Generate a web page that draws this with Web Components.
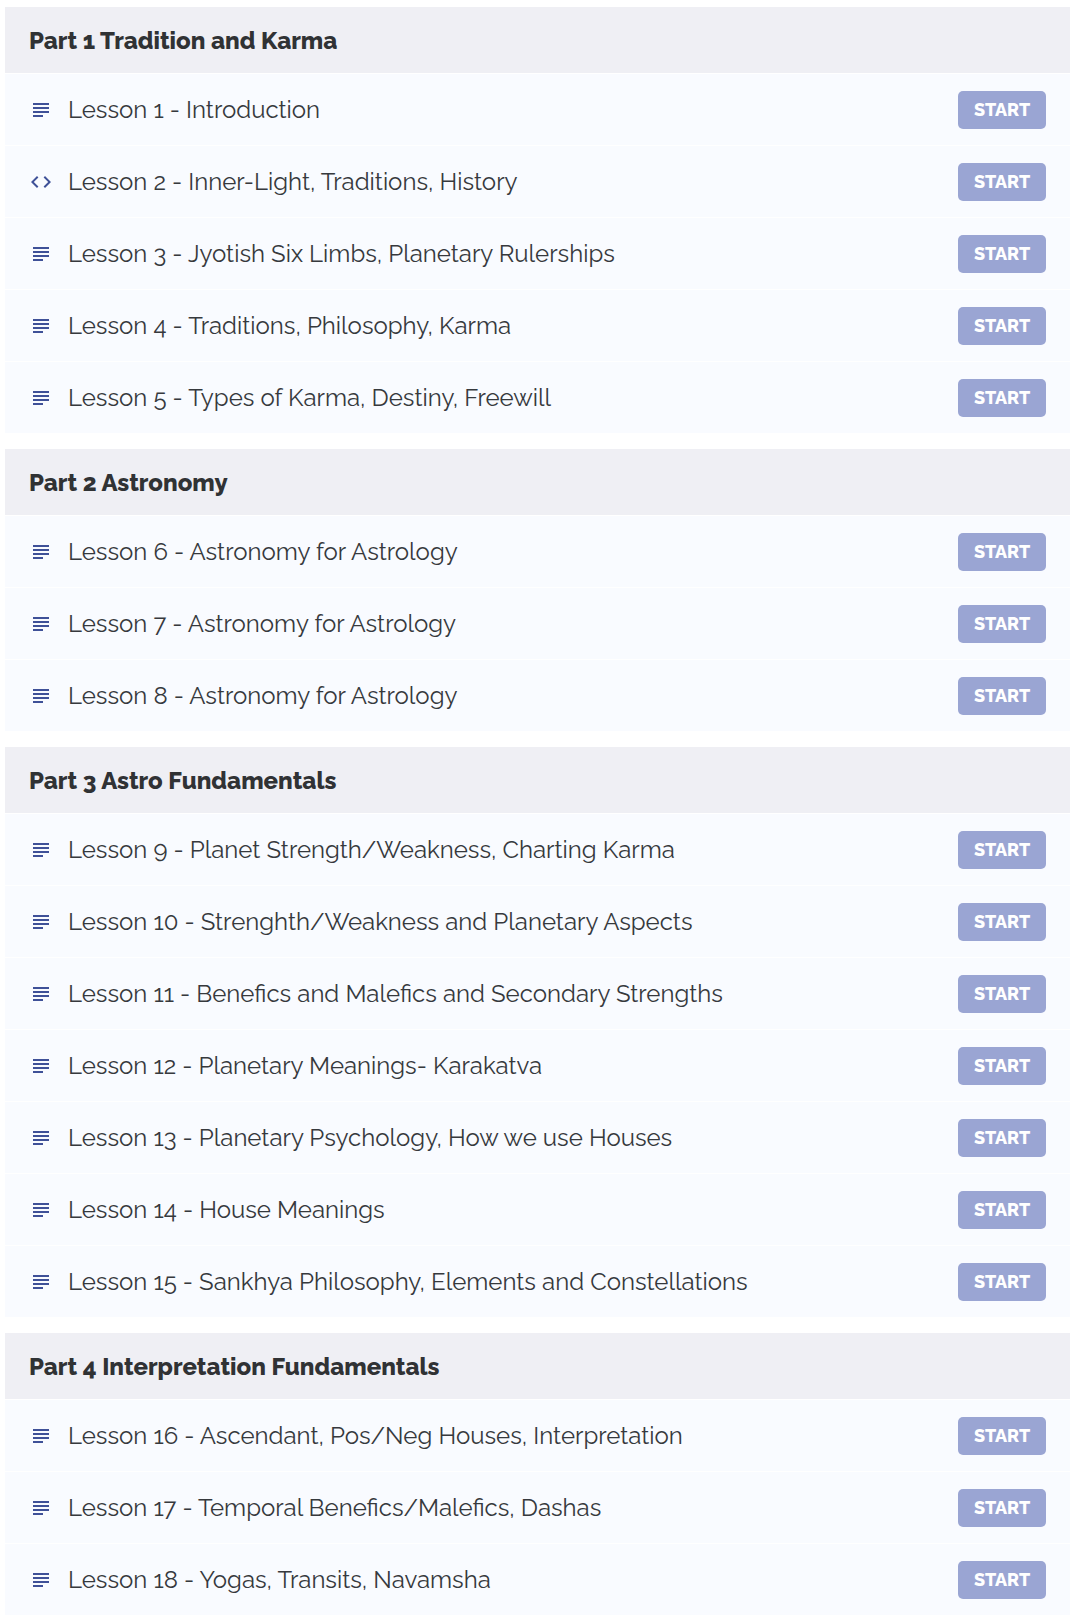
<!DOCTYPE html>
<html lang="en">
<head>
<meta charset="utf-8">
<meta name="viewport" content="width=device-width, initial-scale=1">
<title>Course curriculum</title>
<style>
  body {
    margin: 0;
    background: #fff;
    color: #36393d;
    font-family: Raleway, "Open Sans", sans-serif;
    font-size: 24px;
    line-height: 32px;
  }
</style>
</head>
<body>
<course-outline>
  <course-section heading="Part 1 Tradition and Karma">
    <lesson-row>Lesson 1 - Introduction</lesson-row>
    <lesson-row kind="code">Lesson 2 - Inner-Light, Traditions, History</lesson-row>
    <lesson-row>Lesson 3 - Jyotish Six Limbs, Planetary Rulerships</lesson-row>
    <lesson-row>Lesson 4 - Traditions, Philosophy, Karma</lesson-row>
    <lesson-row>Lesson 5 - Types of Karma, Destiny, Freewill</lesson-row>
  </course-section>
  <course-section heading="Part 2 Astronomy">
    <lesson-row>Lesson 6 - Astronomy for Astrology</lesson-row>
    <lesson-row>Lesson 7 - Astronomy for Astrology</lesson-row>
    <lesson-row>Lesson 8 - Astronomy for Astrology</lesson-row>
  </course-section>
  <course-section heading="Part 3 Astro Fundamentals">
    <lesson-row>Lesson 9 - Planet Strength/Weakness, Charting Karma</lesson-row>
    <lesson-row>Lesson 10 - Strenghth/Weakness and Planetary Aspects</lesson-row>
    <lesson-row>Lesson 11 - Benefics and Malefics and Secondary Strengths</lesson-row>
    <lesson-row>Lesson 12 - Planetary Meanings- Karakatva</lesson-row>
    <lesson-row>Lesson 13 - Planetary Psychology, How we use Houses</lesson-row>
    <lesson-row>Lesson 14 - House Meanings</lesson-row>
    <lesson-row>Lesson 15 - Sankhya Philosophy, Elements and Constellations</lesson-row>
  </course-section>
  <course-section heading="Part 4 Interpretation Fundamentals">
    <lesson-row>Lesson 16 - Ascendant, Pos/Neg Houses, Interpretation</lesson-row>
    <lesson-row>Lesson 17 - Temporal Benefics/Malefics, Dashas</lesson-row>
    <lesson-row>Lesson 18 - Yogas, Transits, Navamsha</lesson-row>
  </course-section>
</course-outline>

<template id="outline-template">
  <style>
    :host { display: flex; flex-direction: column; gap: 15px; padding: 7px 10px 4px 5px; }
  </style>
  <slot></slot>
</template>

<template id="section-template">
  <style>
    :host { display: block; }
    h2 {
      margin: 0;
      padding: 18px 24px 16px;
      background: #efeff4;
      border-bottom: 1px solid #fff;
      color: #303234;
      font-size: 24px;
      line-height: 32px;
      font-weight: 800;
    }
  </style>
  <section aria-labelledby="heading">
    <h2 id="heading"></h2>
    <slot></slot>
  </section>
</template>

<template id="lesson-template">
  <style>
    :host {
      display: flex;
      align-items: center;
      gap: 15px;
      padding: 17px 24px 16px;
      background: #f9fbff;
      border-bottom: 1px solid #fff;
    }
    svg { flex: none; width: 24px; height: 24px; fill: #3f5198; }
    .title { flex: 1; min-width: 0; }
    button {
      flex: none;
      min-width: 88px;
      padding: 7px 14px;
      border: 0;
      border-radius: 5px;
      background: #9aa5d3;
      color: #fff;
      font-family: inherit;
      font-size: 18px;
      line-height: 24px;
      font-weight: 800;
      cursor: pointer;
    }
  </style>
  <svg viewBox="0 0 24 24" aria-hidden="true"><path></path></svg>
  <span class="title" id="title"><slot></slot></span>
  <button type="button" aria-describedby="title">START</button>
</template>

<script>
  const stamp = (host, id) => {
    const root = host.attachShadow({ mode: "open" });
    root.append(document.getElementById(id).content.cloneNode(true));
    return root;
  };

  const ICONS = {
    text: "M14 17H4v2h10v-2zm6-8H4v2h16V9zM4 15h16v-2H4v2zM4 5v2h16V5H4z",
    code: "M9.4 16.6L4.8 12l4.6-4.6L8 6l-6 6 6 6 1.4-1.4zm5.2 0l4.6-4.6-4.6-4.6L16 6l6 6-6 6-1.4-1.4z"
  };

  customElements.define("course-outline", class extends HTMLElement {
    constructor() { super(); stamp(this, "outline-template"); }
  });

  customElements.define("course-section", class extends HTMLElement {
    constructor() { super(); stamp(this, "section-template"); }
    connectedCallback() {
      this.shadowRoot.querySelector("h2").textContent = this.getAttribute("heading");
    }
  });

  customElements.define("lesson-row", class extends HTMLElement {
    constructor() { super(); stamp(this, "lesson-template"); }
    connectedCallback() {
      const kind = this.getAttribute("kind") || "text";
      this.shadowRoot.querySelector("path").setAttribute("d", ICONS[kind]);
    }
  });
</script>
</body>
</html>
